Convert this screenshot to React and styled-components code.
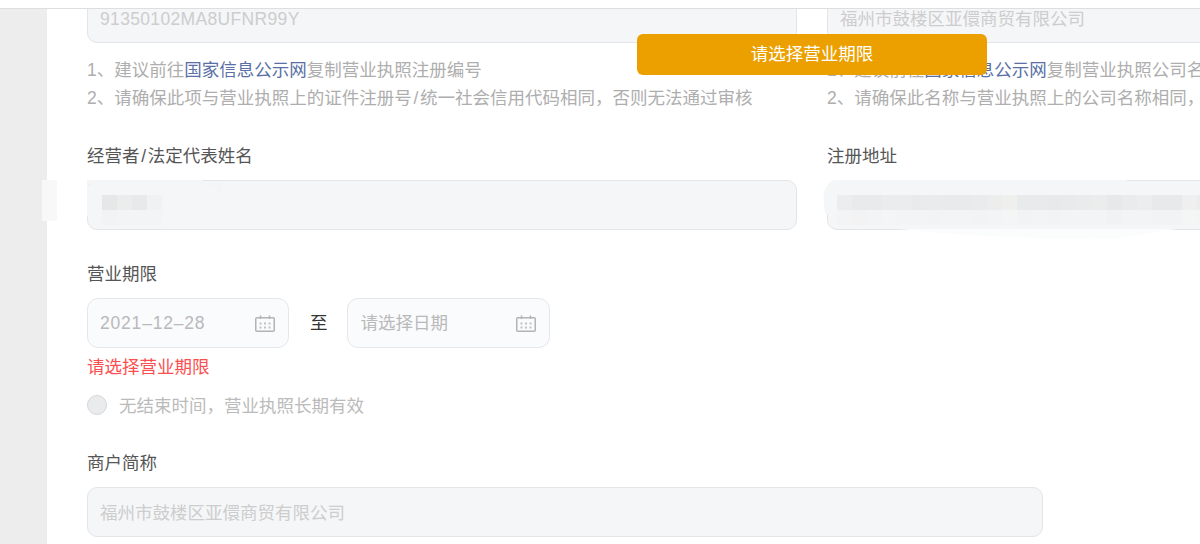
import styled, { createGlobalStyle } from 'styled-components'

const GlobalStyle = createGlobalStyle`
  html, body {
    margin: 0;
    height: 544px;
    overflow: hidden;
    background: #fff;
  }
  * {
    box-sizing: border-box;
  }
`;

const Page = styled.div`
  position: relative;
  width: 1200px;
  height: 544px;
  overflow: hidden;
  font-family: "Liberation Sans", "Noto Sans CJK SC", sans-serif;
  font-size: 17.5px;
  line-height: 28px;
`;

const TopBar = styled.div`
  height: 9px;
  border-bottom: 1px solid #dedede;
`;

const Body = styled.div`
  display: flex;
  height: 535px;
`;

const Gutter = styled.div`
  flex: 0 0 47px;
  background: #ededed;
`;

const Clip = styled.div`
  flex: 1;
  min-width: 0;
  overflow: hidden;
`;

const Main = styled.main`
  padding-left: 40px;
  margin-top: -16px;
`;

const Columns = styled.div`
  display: grid;
  grid-template-columns: 710px 710px;
  column-gap: 30px;
  margin-bottom: 30px;
`;

const Section = styled.section`
  margin-bottom: 30px;
`;

const Label = styled.div`
  color: #555;
  margin-bottom: 10px;
`;

const FieldWrap = styled.div`
  position: relative;
`;

const Field = styled.div`
  height: 50px;
  width: ${(p) => p.$width || '100%'};
  display: flex;
  flex-direction: column;
  justify-content: center;
  padding: 1px 12px 0;
  background: #f5f6f8;
  border: 1px solid #e3e5e8;
  border-radius: 10px;
  color: #cdcdcd;
  white-space: nowrap;
  overflow: hidden;
`;

const SerialText = styled.span`
  letter-spacing: 0.34px;
`;

const Hints = styled.div`
  margin-top: 13px;
  color: #aeaeae;
  white-space: nowrap;
`;

const HintLink = styled.a`
  color: #5a6fa6;
`;

const Slash = styled.span`
  margin: 0 1.7px;
`;

const MosaicRow = styled.div`
  display: flex;
  height: 15px;
`;

const Cell = styled.span`
  flex: 0 0 15px;
  height: 15px;
  background: ${(p) => p.$tone};
`;

const Mosaic = styled.div`
  margin-left: ${(p) => p.$indent || 0}px;
  margin-top: 9px;
`;

const Smudge = styled.svg`
  position: absolute;
  left: 0;
  top: 0;
  width: 10px;
  height: 10px;
  overflow: visible;
  pointer-events: none;
`;

const EdgePatch = styled.div`
  position: absolute;
  left: 42px;
  top: 180px;
  width: 15px;
  height: 41px;
  background: #f8f8f8;
`;

const DateRow = styled.div`
  display: flex;
  align-items: center;
`;

const DateBox = styled.div`
  width: ${(p) => p.$width}px;
  height: 50px;
  display: flex;
  align-items: center;
  justify-content: space-between;
  padding: 0 13px 0 ${(p) => p.$inset}px;
  background: #fafbfd;
  border: 1px solid #e5e7eb;
  border-radius: 11px;
  color: #b9b9b9;
`;

const DateValue = styled.span`
  letter-spacing: 0.8px;
`;

const DateSep = styled.span`
  margin: 0 19px 0 21px;
  color: #333;
`;

const ErrorText = styled.div`
  margin-top: 5px;
  color: #fa4f50;
`;

const RadioRow = styled.div`
  display: flex;
  align-items: center;
  gap: 12px;
  height: 28px;
  margin-top: 10px;
  color: #bbb;
`;

const RadioText = styled.span`
  padding-top: 1px;
`;

const Radio = styled.span`
  width: 20px;
  height: 20px;
  border-radius: 50%;
  background: #eaebed;
  border: 1px solid #d4d6d9;
`;

const Toast = styled.div`
  position: absolute;
  left: 637px;
  top: 34px;
  width: 350px;
  height: 41px;
  display: flex;
  align-items: center;
  justify-content: center;
  padding-bottom: 2px;
  background: #eba000;
  border-radius: 6px;
  color: #fff;
`;

function CalendarIcon() {
  return (
    <svg width="20" height="17" viewBox="0 0 20 17" fill="none">
      <rect x="0.75" y="2.75" width="18.5" height="13.5" rx="1" stroke="#b4b4b4" strokeWidth="1.5" />
      <path d="M5.5 0.5V4M14.5 0.5V4" stroke="#b4b4b4" strokeWidth="1.5" />
      <path
        d="M4.5 7.5h2v2h-2zM9 7.5h2v2H9zM13.5 7.5h2v2h-2zM4.5 11.5h2v2h-2zM9 11.5h2v2H9zM13.5 11.5h2v2h-2z"
        fill="#c2c2c2"
      />
    </svg>
  );
}

const nameRows = [
  ['#e6e7e7', '#ebecec', '#e8e9eb', '#f0f1f2'],
  ['#f2f3f4', '#f3f4f5', '#f3f4f5', '#f3f4f5'],
];

const addressRows = [
  ['#ecedee', '#e9eaec', '#e9eaec', '#ebecee', '#ebeced', '#e9eaec', '#eaebed', '#e9eaec', '#e9eaec', '#eaebed', '#ecedec', '#eff0ee', '#e9eaeb', '#e9eaeb', '#e8e9ea', '#e9eaeb', '#eaebec', '#ebecec', '#e7e8ea', '#eaebec', '#ecedee', '#e8e9eb', '#e8e9eb', '#eeefee', '#ebeced'],
  ['#f3f4f5', '#f2f3f2', '#f3f4f5', '#f4f5f6', '#f3f4f5', '#f3f4f5', '#f2f3f4', '#f3f4f5', '#f3f4f5', '#f2f3f4', '#f3f4f5', '#f4f5f5', '#f2f3f4', '#f3f4f5', '#f2f3f4', '#f3f4f5', '#f3f4f5', '#f3f4f5', '#f1f2f3', '#f3f4f5', '#f3f4f5', '#f2f3f4', '#f2f3f4', '#f4f5f5', '#f3f4f5'],
];

function MosaicBlock({ rows, indent }) {
  return (
    <Mosaic $indent={indent}>
      {rows.map((row, r) => (
        <MosaicRow key={r}>
          {row.map((tone, c) => <Cell key={c} $tone={tone} />)}
        </MosaicRow>
      ))}
    </Mosaic>
  );
}

export default function App() {
  return (
    <Page>
      <GlobalStyle />
      <TopBar />
      <Body>
        <Gutter />
        <Clip>
          <Main>
            <Columns>
              <div>
                <Field><SerialText>91350102MA8UFNR99Y</SerialText></Field>
                <Hints>
                  <div>1、建议前往<HintLink>国家信息公示网</HintLink>复制营业执照注册编号</div>
                  <div>2、请确保此项与营业执照上的证件注册号<Slash>/</Slash>统一社会信用代码相同，否则无法通过审核</div>
                </Hints>
              </div>
              <div>
                <Field>福州市鼓楼区亚儇商贸有限公司</Field>
                <Hints>
                  <div>1、建议前往<HintLink>国家信息公示网</HintLink>复制营业执照公司名称</div>
                  <div>2、请确保此名称与营业执照上的公司名称相同，否则无法通过审核</div>
                </Hints>
              </div>
            </Columns>

            <Columns>
              <div>
                <Label>经营者<Slash>/</Slash>法定代表姓名</Label>
                <FieldWrap>
                  <Field>
                    <MosaicBlock rows={nameRows} indent={2} />
                  </Field>
                  <Smudge aria-hidden="true">
                    <path d="M0 0H115L135 14V3H2V36H0Z" fill="#f4f5f7" />
                  </Smudge>
                </FieldWrap>
              </div>
              <div>
                <Label>注册地址</Label>
                <FieldWrap>
                  <Field>
                    <MosaicBlock rows={addressRows} indent={-3} />
                  </Field>
                  <Smudge aria-hidden="true">
                    <path d="M8 0H300V2H10V34H-2Q-4 20-3 12Q0 2 8 0Z" fill="#f5f6f7" />
                    <path d="M73 49Q130 55 183 57Q230 60 290 59Q320 52 350 49Z" fill="#fbfcfc" />
                  </Smudge>
                </FieldWrap>
              </div>
            </Columns>

            <Section>
              <Label>营业期限</Label>
              <DateRow>
                <DateBox $width={202} $inset={12}><DateValue>2021–12–28</DateValue><CalendarIcon /></DateBox>
                <DateSep>至</DateSep>
                <DateBox $width={203} $inset={13}>请选择日期<CalendarIcon /></DateBox>
              </DateRow>
              <ErrorText>请选择营业期限</ErrorText>
              <RadioRow>
                <Radio />
                <RadioText>无结束时间，营业执照长期有效</RadioText>
              </RadioRow>
            </Section>

            <Section>
              <Label>商户简称</Label>
              <Field $width="956px">福州市鼓楼区亚儇商贸有限公司</Field>
            </Section>
          </Main>
        </Clip>
      </Body>
      <EdgePatch />
      <Toast>请选择营业期限</Toast>
    </Page>
  );
}
